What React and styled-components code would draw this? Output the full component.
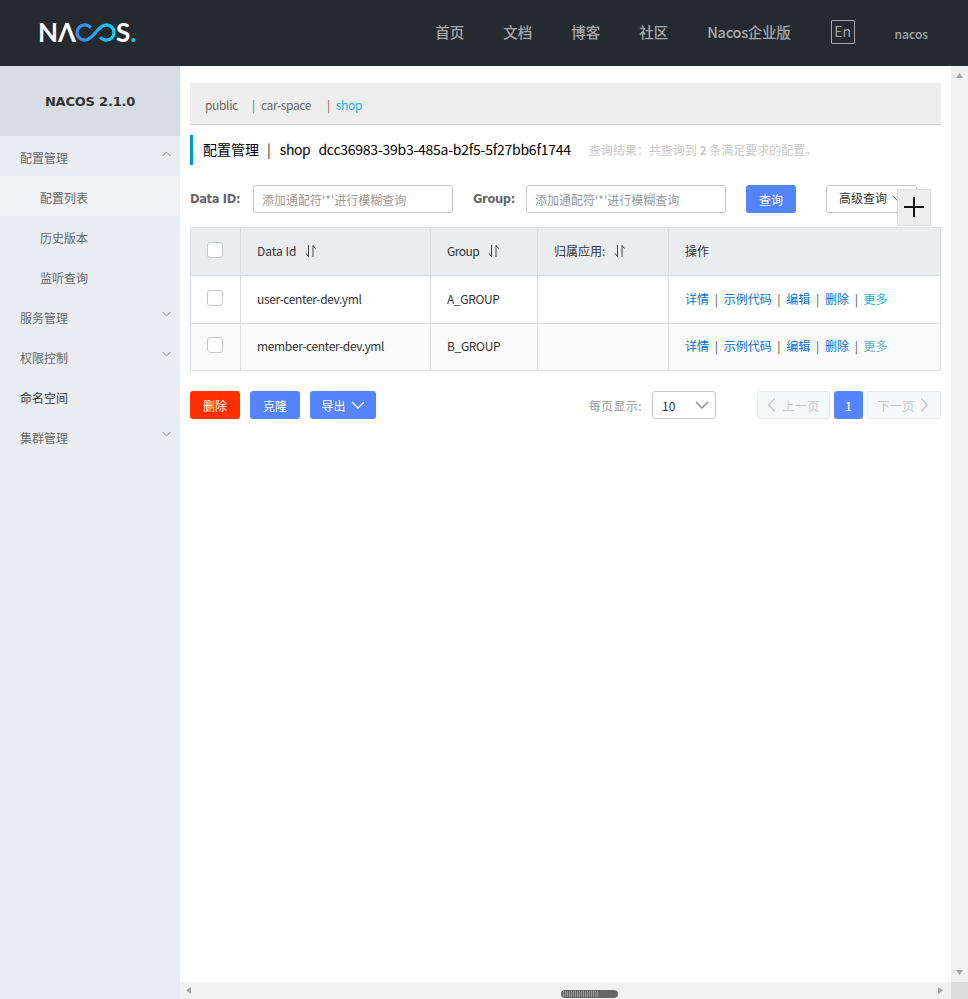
import React from "react";
import styled, { createGlobalStyle } from "styled-components";

const GlobalStyle = createGlobalStyle`
  html, body {
    margin: 0;
    padding: 0;
    height: 100%;
    overflow: hidden;
    background: #fff;
  }
  body, button, input {
    font-family: "Noto Sans CJK SC", "Liberation Sans", sans-serif;
    font-size: 12px;
    color: #333;
  }
  * {
    box-sizing: border-box;
  }
`;

const Page = styled.div`
  width: 968px;
  height: 999px;
  display: flex;
  flex-direction: column;
`;

const Header = styled.header`
  height: 66px;
  background: #252a2f;
  display: flex;
  align-items: center;
  padding: 0 40px 2px 40px;
  justify-content: space-between;
`;

const Logo = styled.div`
  display: flex;
  align-items: center;
  height: 24px;
  margin-left: -2px;
  font-family: Lato, sans-serif;
  font-weight: 700;
  font-size: 26px;
  line-height: 24px;
  color: #fff;
`;

const LogoDot = styled.span`
  color: #1cc8ee;
`;

const Nav = styled.nav`
  display: flex;
  align-items: center;
  color: #a5a8aa;
`;

const NavItem = styled.a`
  font-size: 14.5px;
  font-weight: 500;
  color: #a6a9ab;
  margin: 0 39px 2px 0;
  letter-spacing: ${(p) => (p.$brand ? "-0.25px" : "0")};
`;

const LangButton = styled.span`
  width: 24px;
  height: 24px;
  border: 1px solid #a6a9ab;
  border-radius: 1px;
  font-size: 14px;
  line-height: 20px;
  text-align: center;
  color: #a6a9ab;
  margin: 0 40px 0 1px;
`;

const UserName = styled.span`
  font-size: 12px;
  font-weight: 500;
  color: #a6a9ab;
  margin-top: 2px;
`;

const Lower = styled.div`
  flex: 1;
  display: flex;
  min-height: 0;
`;

const Sidebar = styled.aside`
  width: 180px;
  background: #e9ecf1;
`;

const SideTitle = styled.div`
  height: 70px;
  background: #d8dce3;
  display: flex;
  align-items: center;
  justify-content: center;
  font-family: "DejaVu Sans", sans-serif;
  font-size: 13px;
  font-weight: 700;
  letter-spacing: -0.2px;
  color: #333;
`;

const MenuItem = styled.div`
  height: 40px;
  display: flex;
  align-items: center;
  justify-content: space-between;
  padding: 2px 9px 0 ${(p) => (p.$sub ? "40px" : "20px")};
  background: ${(p) => (p.$active ? "#f0f2f5" : "transparent")};
  color: ${(p) => (p.$dark ? "#333" : "#666")};
`;

const MenuChevron = styled.svg`
  width: 9px;
  height: 6px;
  margin-top: -6px;
  fill: none;
  stroke: #8a8f96;
  stroke-width: 1;
`;

const RightSide = styled.div`
  flex: 1;
  min-width: 0;
  display: flex;
  flex-direction: column;
`;

const ContentRow = styled.div`
  flex: 1;
  min-height: 0;
  display: flex;
`;

const Main = styled.main`
  flex: 1;
  min-width: 0;
  padding: 17px 10px 0;
  position: relative;
`;

const Tabs = styled.div`
  height: 42px;
  background: #eee;
  border-bottom: 1px solid #ccc;
  display: flex;
  align-items: center;
  padding: 2px 0 0 15px;
  color: #666;
  letter-spacing: -0.35px;
`;

const Tab = styled.span`
  width: ${(p) => p.$width}px;
  color: ${(p) => (p.$active ? "#1ab3d8" : "#666")};
`;

const TabBar = styled.span`
  margin-right: 6px;
  color: #666;
`;

const TitleBar = styled.div`
  margin-top: 10px;
  height: 30px;
  border-left: 3px solid #09c;
  padding: 0 0 2px 10px;
  display: flex;
  align-items: center;
  font-size: 14px;
  color: #000;
  white-space: nowrap;
`;

const TitlePipe = styled.span`
  margin: 0 9px 0 8px;
  color: #223;
`;

const TitleName = styled.span`
  letter-spacing: -0.4px;
`;

const TitleId = styled.span`
  margin-left: 8px;
  letter-spacing: -0.25px;
`;

const Summary = styled.span`
  margin-left: 18px;
  font-size: 12px;
  color: #c8c8c8;
`;

const SearchRow = styled.div`
  margin-top: 20px;
  height: 28px;
  display: flex;
  align-items: center;
`;

const Label = styled.label`
  font-family: "DejaVu Sans", sans-serif;
  font-size: 11.5px;
  font-weight: 700;
  letter-spacing: -0.35px;
  color: #666;
  width: ${(p) => p.$width}px;
`;

const Input = styled.input`
  width: 200px;
  height: 28px;
  border: 1px solid #c4c6cf;
  border-radius: 3px;
  padding: 0 8px;
  outline: none;
  margin-right: 20px;
  &::placeholder {
    color: #999;
  }
`;

const Button = styled.button`
  height: 28px;
  width: ${(p) => p.$width}px;
  border: none;
  border-radius: 3px;
  background: ${(p) => (p.$danger ? "#ff3000" : "#5584ff")};
  color: #fff;
  display: inline-flex;
  align-items: center;
  justify-content: center;
  gap: 5px;
  padding: 0;
`;

const AdvancedButton = styled.button`
  margin-left: 30px;
  width: 91px;
  height: 28px;
  background: #fff;
  border: 1px solid #c4c6cf;
  border-radius: 3px;
  padding: 0 0 3px 12px;
  display: flex;
  align-items: center;
  gap: 5px;
  color: #333;
`;

const PlusButton = styled.div`
  position: absolute;
  left: 717px;
  top: 123px;
  width: 34px;
  height: 37px;
  background: #eee;
  border: 1px solid #ddd;
  display: flex;
  align-items: center;
  justify-content: center;
  padding-bottom: 2px;
`;

const Table = styled.table`
  margin-top: 14px;
  width: 750px;
  table-layout: fixed;
  border-collapse: collapse;
`;

const Th = styled.th`
  height: 48px;
  background: #ebecf0;
  border: 1px solid #dcdee3;
  padding: 0 16px 2px;
  text-align: left;
  font-weight: 400;
  color: #333;
  white-space: nowrap;
`;

const HeadText = styled.span`
  letter-spacing: ${(p) => (p.$tight ? "-0.5px" : "0")};
`;

const Td = styled.td`
  height: ${(p) => (p.$alt ? "47px" : "48px")};
  border: 1px solid #dcdee3;
  padding: 0 16px ${(p) => (p.$alt ? "4px" : "2px")};
  background: ${(p) => (p.$alt ? "#fafafa" : "#fff")};
  color: #333;
`;

const FileText = styled.span`
  letter-spacing: -0.35px;
`;

const Check = styled.span`
  display: block;
  width: 16px;
  height: 16px;
  border: 1px solid #c4c6cf;
  border-radius: 3px;
  background: #fff;
  margin-top: -1px;
`;

const SortIcon = styled.svg`
  width: 12px;
  height: 14px;
  margin-left: 9px;
  vertical-align: -2px;
  fill: none;
  stroke: #444;
  stroke-width: 1;
`;

const Action = styled.a`
  color: ${(p) => (p.$more ? (p.$dim ? "#5db3c6" : "#1ab3d8") : "#0a6fd0")};
`;

const Pipe = styled.span`
  margin: 0 5.7px;
  color: #555;
`;

const Footer = styled.div`
  margin-top: 20px;
  height: 28px;
  display: flex;
  align-items: center;
  gap: 10px;
`;

const PageSizeLabel = styled.span`
  margin-left: auto;
  color: #999;
  letter-spacing: 0.4px;
`;

const Select = styled.div`
  width: 64px;
  height: 28px;
  border: 1px solid #c4c6cf;
  border-radius: 3px;
  display: flex;
  align-items: center;
  justify-content: space-between;
  padding: 0 6px 0 9px;
  color: #333;
  margin-right: 31px;
`;

const Pager = styled.div`
  display: flex;
  gap: 4px;
`;

const PagerButton = styled.div`
  height: 28px;
  width: ${(p) => p.$width}px;
  background: #f7f8fa;
  border: 1px solid #e6e7eb;
  border-radius: 3px;
  color: #c4c6cf;
  display: flex;
  align-items: center;
  justify-content: center;
  gap: 4px;
  letter-spacing: 0.3px;
`;

const PrevButton = styled(PagerButton)`
  gap: 5px;
  padding-right: 4px;
`;

const NextButton = styled(PagerButton)`
  padding-left: 2px;
`;

const PagerCurrent = styled.div`
  height: 28px;
  width: 29px;
  border-radius: 3px;
  background: #5584ff;
  color: #fff;
  display: flex;
  align-items: center;
  justify-content: center;
  font-weight: 500;
`;

const VScroll = styled.div`
  width: 17px;
  background: #f1f1f1;
  display: flex;
  flex-direction: column;
  justify-content: space-between;
  align-items: center;
  padding: 6px 0;
`;

const HScroll = styled.div`
  height: 17px;
  background: #f1f1f1;
  display: flex;
  align-items: center;
  position: relative;
  padding: 0 24px 0 5px;
  justify-content: space-between;
`;

const HThumb = styled.div`
  position: absolute;
  left: 381px;
  top: 8px;
  width: 57px;
  height: 8px;
  border-radius: 4px;
  background: repeating-linear-gradient(
      90deg,
      #5bc06f 0 1px,
      #666 1px 2px
    )
    2px 1px / 35px 6px no-repeat,
    #666;
`;

const Corner = styled.div`
  position: absolute;
  right: 0;
  top: 0;
  width: 17px;
  height: 17px;
  background: #dcdcdc;
`;

const ScrollArrow = styled.svg`
  width: 7px;
  height: 7px;
  fill: #a3a3a3;
`;

const Chevron = ({ up }) => (
  <MenuChevron viewBox="0 0 9 6">
    <path d={up ? "M.5 5 4.500 1l4 4" : "M.5 1l4 4 4-4"} />
  </MenuChevron>
);

const Sort = () => (
  <SortIcon viewBox="0 0 12 14">
    <path d="M3.500 1v11.500M1 9.500l2.500 3M8 13V1.500M8 1.500l2.500 3" />
  </SortIcon>
);

const Caret = ({ dir, color = "#fff", size = 14 }) => {
  const d = {
    down: "M1 4l6 6 6-6",
    left: "M11 .5 4.500 7 11 13.500",
    right: "M3 .5 9.500 7 3 13.500",
  }[dir];
  return (
    <svg width={size} height={size} viewBox="0 0 14 14" fill="none" stroke={color} strokeWidth="1.4">
      <path d={d} />
    </svg>
  );
};

const LogoMark = () => (
  <svg width="41" height="19" viewBox="0 0 43 20" fill="none" strokeWidth="3.4" style={{ margin: "0 0 0 -1px" }}>
    <defs>
      <linearGradient id="nacosMark" x1="0" y1="0" x2="1" y2="0">
        <stop offset="0" stopColor="#3586f2" />
        <stop offset="1" stopColor="#19d2ef" />
      </linearGradient>
    </defs>
    <path
      stroke="url(#nacosMark)"
      d="M16.500 5C14.600 3 12.400 2 10 2 5.500 2 2 5.500 2 10s3.500 8 8 8c5 0 8-4 11.500-8s6.500-8 11.500-8c4.500 0 8 3.500 8 8s-3.500 8-8 8c-2.600 0-4.800-1-6.700-3"
    />
  </svg>
);

const navItems = ["首页", "文档", "博客", "社区"];
const rows = [
  { id: "user-center-dev.yml", group: "A_GROUP" },
  { id: "member-center-dev.yml", group: "B_GROUP" },
];
const actions = ["详情", "示例代码", "编辑", "删除"];
const placeholder = "添加通配符'*'进行模糊查询";

export default function App() {
  return (
    <Page>
      <GlobalStyle />
      <Header>
        <Logo>
          N<span>Λ</span>
          <LogoMark />
          S<LogoDot>.</LogoDot>
        </Logo>
        <Nav>
          {navItems.map((item) => (
            <NavItem key={item}>{item}</NavItem>
          ))}
          <NavItem $brand>Nacos企业版</NavItem>
          <LangButton>En</LangButton>
          <UserName>nacos</UserName>
        </Nav>
      </Header>
      <Lower>
        <Sidebar>
          <SideTitle>NACOS 2.1.0</SideTitle>
          <MenuItem>
            配置管理
            <Chevron up />
          </MenuItem>
          <MenuItem $sub $active>配置列表</MenuItem>
          <MenuItem $sub>历史版本</MenuItem>
          <MenuItem $sub>监听查询</MenuItem>
          <MenuItem>
            服务管理
            <Chevron />
          </MenuItem>
          <MenuItem>
            权限控制
            <Chevron />
          </MenuItem>
          <MenuItem $dark>命名空间</MenuItem>
          <MenuItem>
            集群管理
            <Chevron />
          </MenuItem>
        </Sidebar>
        <RightSide>
          <ContentRow>
            <Main>
              <Tabs>
                <Tab $width={47}>public</Tab>
                <TabBar>|</TabBar>
                <Tab $width={66}>car-space</Tab>
                <TabBar>|</TabBar>
                <Tab $active>shop</Tab>
              </Tabs>
              <TitleBar>
                配置管理
                <TitlePipe>|</TitlePipe>
                <TitleName>shop</TitleName>
                <TitleId>dcc36983-39b3-485a-b2f5-5f27bb6f1744</TitleId>
                <Summary>
                  查询结果：共查询到 <b>2</b> 条满足要求的配置。
                </Summary>
              </TitleBar>
              <SearchRow>
                <Label $width={63}>Data ID:</Label>
                <Input placeholder={placeholder} />
                <Label $width={53}>Group:</Label>
                <Input placeholder={placeholder} />
                <Button $width={50}>查询</Button>
                <AdvancedButton>
                  高级查询
                  <Caret dir="down" color="#666" size={10} />
                </AdvancedButton>
              </SearchRow>
              <PlusButton>
                <svg width="22" height="22" viewBox="0 0 22 22" stroke="#111" strokeWidth="2">
                  <path d="M11 1v20M1 11h20" />
                </svg>
              </PlusButton>
              <Table>
                <colgroup>
                  <col width="50" />
                  <col width="190" />
                  <col width="107" />
                  <col width="131" />
                  <col width="272" />
                </colgroup>
                <thead>
                  <tr>
                    <Th>
                      <Check />
                    </Th>
                    <Th>
                      Data Id
                      <Sort />
                    </Th>
                    <Th>
                      <HeadText $tight>Group</HeadText>
                      <Sort />
                    </Th>
                    <Th>
                      归属应用:
                      <Sort />
                    </Th>
                    <Th>操作</Th>
                  </tr>
                </thead>
                <tbody>
                  {rows.map((row, i) => (
                    <tr key={row.id}>
                      <Td $alt={i === 1}>
                        <Check />
                      </Td>
                      <Td $alt={i === 1}>
                        <FileText>{row.id}</FileText>
                      </Td>
                      <Td $alt={i === 1}>
                        <FileText>{row.group}</FileText>
                      </Td>
                      <Td $alt={i === 1} />
                      <Td $alt={i === 1}>
                        {actions.map((a) => (
                          <React.Fragment key={a}>
                            <Action>{a}</Action>
                            <Pipe>|</Pipe>
                          </React.Fragment>
                        ))}
                        <Action $more $dim={i === 1}>更多</Action>
                      </Td>
                    </tr>
                  ))}
                </tbody>
              </Table>
              <Footer>
                <Button $danger $width={50}>删除</Button>
                <Button $width={50}>克隆</Button>
                <Button $width={66}>
                  导出
                  <Caret dir="down" />
                </Button>
                <PageSizeLabel>每页显示:</PageSizeLabel>
                <Select>
                  10
                  <Caret dir="down" color="#888" />
                </Select>
                <Pager>
                  <PrevButton $width={73}>
                    <Caret dir="left" color="#c4c6cf" />
                    上一页
                  </PrevButton>
                  <PagerCurrent>1</PagerCurrent>
                  <NextButton $width={74}>
                    下一页
                    <Caret dir="right" color="#c4c6cf" />
                  </NextButton>
                </Pager>
              </Footer>
            </Main>
            <VScroll>
              <ScrollArrow viewBox="0 0 7 7">
                <path d="M3.500 1 7 6H0z" />
              </ScrollArrow>
              <ScrollArrow viewBox="0 0 7 7">
                <path d="M0 1h7L3.500 6z" />
              </ScrollArrow>
            </VScroll>
          </ContentRow>
          <HScroll>
            <ScrollArrow viewBox="0 0 7 7">
              <path d="M6 0v7L1 3.500z" />
            </ScrollArrow>
            <ScrollArrow viewBox="0 0 7 7">
              <path d="M1 0v7l5-3.500z" />
            </ScrollArrow>
            <HThumb />
            <Corner />
          </HScroll>
        </RightSide>
      </Lower>
    </Page>
  );
}
